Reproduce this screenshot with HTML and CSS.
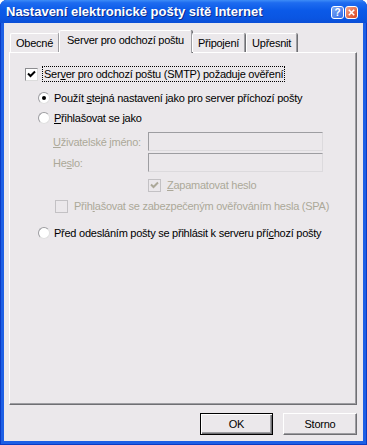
FILE: index.html
```html
<!DOCTYPE html>
<html lang="cs">
<head>
    <meta charset="UTF-8">
    <title>Nastavení elektronické pošty sítě Internet</title>
    <link rel="stylesheet" href="styles.css">
</head>
<body>
    <div class="window">
        <div class="titlebar">
            <span class="title">Nastavení elektronické pošty sítě Internet</span>
            <div class="caption-buttons">
                <button class="cap-btn help">?</button>
                <button class="cap-btn close">
                    <svg width="9" height="9" viewBox="0 0 9 9"><path d="M1 1L8 8M8 1L1 8" stroke="#fff" stroke-width="2"/></svg>
                </button>
            </div>
        </div>

        <div class="client">
            <div class="tabs">
                <div class="tab">Obecné</div>
                <div class="tab active">Server pro odchozí poštu</div>
                <div class="tab">Připojení</div>
                <div class="tab">Upřesnit</div>
            </div>

            <div class="panel">
                <div class="option">
                    <span class="check"><svg width="9" height="9" viewBox="0 0 9 9"><path d="M1 3.5L3.5 6L8 1.5" fill="none" stroke="#000" stroke-width="2"/></svg></span>
                    <span class="label focus">Ser<u>v</u>er pro odchozí poštu (SMTP) požaduje ověření</span>
                </div>

                <div class="group">
                    <div class="option">
                        <span class="radio selected"></span>
                        <span class="label">Použít <u>s</u>tejná nastavení jako pro server příchozí pošty</span>
                    </div>
                    <div class="option spaced">
                        <span class="radio"></span>
                        <span class="label"><u>P</u>řihlašovat se jako</span>
                    </div>

                    <div class="credentials">
                        <div class="field">
                            <span class="field-label disabled"><u>U</u>živatelské jméno:</span>
                            <span class="textbox"></span>
                        </div>
                        <div class="field">
                            <span class="field-label disabled">He<u>s</u>lo:</span>
                            <span class="textbox"></span>
                        </div>
                        <div class="option remember">
                            <span class="check disabled"><svg width="9" height="9" viewBox="0 0 9 9"><path d="M1 3.5L3.5 6L8 1.5" fill="none" stroke="#aca899" stroke-width="2"/></svg></span>
                            <span class="label disabled"><u>Z</u>apamatovat heslo</span>
                        </div>
                        <div class="option spa">
                            <span class="check disabled"></span>
                            <span class="label disabled">Přih<u>l</u>ašovat se zabezpečeným ověřováním hesla (SPA)</span>
                        </div>
                    </div>

                    <div class="option last">
                        <span class="radio"></span>
                        <span class="label">Před odesláním pošty se přihlásit k serveru pří<u>c</u>hozí pošty</span>
                    </div>
                </div>
            </div>

            <div class="buttons">
                <button class="push default">OK</button>
                <button class="push">Storno</button>
            </div>
        </div>
    </div>
</body>
</html>
```

FILE: styles.css
```css
/* základ */
body {
    margin: 0;
    background: #ffffff;
    font-family: "Liberation Sans", Arial, sans-serif;
    font-size: 11px;
    letter-spacing: -0.25px;
    color: #000;
}

/* okno */
.window {
    width: 367px;
    height: 445px;
    display: flex;
    flex-direction: column;
    background: #1d5fe5;
    border-radius: 7px 7px 0 0;
    box-shadow: inset 1px 0 0 #0a3bc6, inset -1px 0 0 #0a3bc6, inset 0 -1px 0 #0a3bc6;
}

.titlebar {
    height: 23px;
    display: flex;
    align-items: center;
    justify-content: space-between;
    padding: 0 9px 0 6px;
    border-radius: 7px 7px 0 0;
    background: linear-gradient(to bottom, #3d8cf7 0%, #1e6cf0 12%, #0b5ae8 45%, #0a55e2 80%, #0c4fd6 100%);
}

.title {
    color: #fff;
    font-weight: bold;
    font-size: 13px;
    letter-spacing: 0;
    text-shadow: 1px 1px 0 #0c2b8c;
}

.caption-buttons {
    display: flex;
    gap: 1px;
    margin-top: 2px;
}

.cap-btn {
    width: 13px;
    height: 13px;
    padding: 0;
    border: 1px solid #fff;
    border-radius: 3px;
    display: flex;
    align-items: center;
    justify-content: center;
    color: #fff;
    font-family: "Liberation Sans", Arial, sans-serif;
    font-weight: bold;
    font-size: 10px;
}

.cap-btn.help {
    background: linear-gradient(135deg, #7faaf6, #2f6ae6);
}

.cap-btn.close {
    background: linear-gradient(135deg, #f3a48a, #d9431c);
}

.cap-btn svg {
    width: 7px;
    height: 7px;
}

/* klientská oblast */
.client {
    flex: 1;
    display: flex;
    flex-direction: column;
    margin: 0 4px 4px;
    padding: 7px 6px 6px 5px;
    background: #ebe8eb;
}

/* záložky */
.tabs {
    height: 22px;
    display: flex;
    align-items: flex-end;
    padding-left: 1px;
    position: relative;
    z-index: 1;
}

.tab {
    height: 18px;
    line-height: 18px;
    padding: 0 5px;
    border-top: 1px solid #fff;
    border-left: 1px solid #fff;
    border-right: 1px solid #9d9da1;
    border-radius: 2px 2px 0 0;
    box-shadow: 1px 0 0 #6f6f73;
    margin-right: 1px;
}

.tab.active {
    height: 22px;
    line-height: 18px;
    margin-bottom: -1px;
    margin-left: -1px;
    margin-right: 0;
    padding: 0 7px;
    background: #ebe8eb;
}

/* panel */
.panel {
    flex: 1;
    padding: 13px 0 0 15px;
    border-top: 1px solid #fff;
    border-left: 1px solid #fff;
    border-right: 1px solid #6f6f73;
    border-bottom: 1px solid #6f6f73;
    box-shadow: inset -1px -1px 0 #9d9da1;
}

.option {
    height: 16px;
    display: flex;
    align-items: center;
}

.label {
    margin-left: 4px;
    padding: 0 1px;
    line-height: 14px;
    border: 1px dotted transparent;
}

.label.focus {
    border-color: #000;
}

.disabled {
    color: #aca899;
}

.check {
    width: 11px;
    height: 11px;
    display: flex;
    align-items: center;
    justify-content: center;
    background: #fff;
    border: 1px solid #8c8c90;
    border-right-color: #dcdcdc;
    border-bottom-color: #dcdcdc;
}

.check.disabled {
    background: #ebe8eb;
    border-color: #c3c1c4;
}

.radio {
    width: 10px;
    height: 10px;
    border-radius: 50%;
    background: #fff;
    border: 1px solid #9c9ca0;
    border-right-color: #e0e0e0;
    border-bottom-color: #e0e0e0;
    display: flex;
    align-items: center;
    justify-content: center;
}

.radio.selected::after {
    content: "";
    width: 4px;
    height: 4px;
    border-radius: 50%;
    background: #000;
}

.group {
    margin-top: 8px;
    padding-left: 13px;
}

.group .option .label {
    margin-left: 2px;
}

.spaced {
    margin-top: 4px;
}

.credentials {
    margin-top: 6px;
    padding-left: 15px;
}

.field {
    display: flex;
    align-items: center;
    margin-bottom: 2px;
}

.field-label {
    width: 95px;
}

.textbox {
    width: 173px;
    height: 17px;
    border: 1px solid #9d9da1;
    border-right-color: #dcdadd;
    border-bottom-color: #dcdadd;
}

.remember {
    margin-top: 5px;
    padding-left: 95px;
}

.spa {
    margin-top: 5px;
    padding-left: 2px;
}

.group .credentials .label {
    margin-left: 4px;
}

.last {
    margin-top: 11px;
}

/* tlačítka */
.buttons {
    display: flex;
    justify-content: flex-end;
    gap: 10px;
    margin-top: 8px;
}

.push {
    width: 74px;
    height: 22px;
    padding: 0;
    background: #ebe8eb;
    font-family: inherit;
    font-size: 11px;
    letter-spacing: inherit;
    border: 1px solid #fff;
    border-right-color: #6f6f73;
    border-bottom-color: #6f6f73;
    box-shadow: inset -1px -1px 0 #9d9da1;
}

.push.default {
    width: 73px;
    border-color: #000;
    box-shadow: inset 1px 1px 0 #fff, inset -1px -1px 0 #6f6f73, inset -2px -2px 0 #9d9da1;
}
```
